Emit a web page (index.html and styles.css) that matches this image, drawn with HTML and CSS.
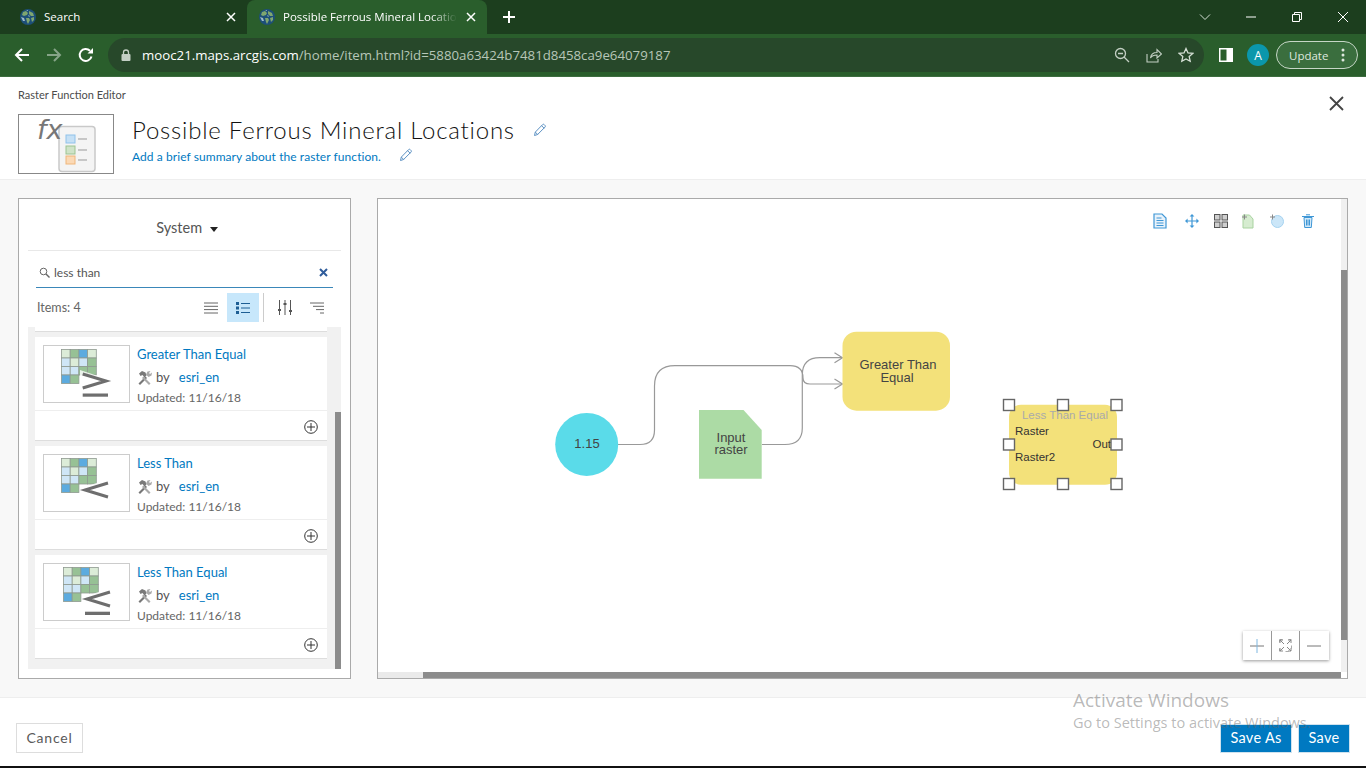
FILE: index.html
```html
<!DOCTYPE html>
<html>
<head>
  <meta charset="utf-8">
  <meta name="viewport" content="width=device-width, initial-scale=1.0">
  <title>Possible Ferrous Mineral Locations</title>
  <link rel="stylesheet" href="styles.css">
</head>
<body>
<svg class="hidden">
  <symbol id="globe" viewBox="0 0 16 16">
    <circle cx="8" cy="8" r="8" fill="#1d4f78"/>
    <path d="M3 3l3-1 2 2-1 2-3 1-2-1zM9 2l4 2 1 3-3 0-2-2zM6 9l3 0 1 2-2 4-1-2zM11 9l3-1 0 3-2 2z" fill="#7fa66f"/>
    <path d="M1 8l3 1 1 3-2 0zM8 6l2 1-1 1zM6 1l2 0 0 1z" fill="#9db8c8"/>
  </symbol>
  <symbol id="tab-close" viewBox="0 0 10 10">
    <path d="M1 1l8 8M9 1l-8 8" stroke="#fff" stroke-width="1.5" fill="none"/>
  </symbol>
  <symbol id="pencil" viewBox="0 0 14 14">
    <path d="M1.5 12.5l.8-3.4 7.2-7.4a1.2 1.2 0 0 1 1.8 0l.7.7a1.2 1.2 0 0 1 0 1.7l-7.4 7.4zM8.6 2.7l2.6 2.6M2.3 9.1l2.6 2.6" fill="none" stroke="#5d92c4" stroke-width="1"/>
  </symbol>
  <symbol id="tools" viewBox="0 0 15 15">
    <path d="M1.5 13.5l7-7 1.5 1.5-7 7z" fill="#777"/>
    <path d="M13.5 13.5l-7-7-1.500 1.500 7 7z" fill="#aaa"/>
    <path d="M2 3.500l3-2.500 3.500 1.500 1 3-2 2-2-2.500-2 1z" fill="#7a7a7a"/>
    <path d="M9 4.500l1.500-3 3-.5-1.500 2 1 1 2-1.500-.5 3-3 1.500z" fill="#aaa"/>
  </symbol>
  <symbol id="add" viewBox="0 0 14 14">
    <circle cx="7" cy="7" r="6.300" fill="#fff" stroke="#333" stroke-width="1"/>
    <path d="M3 7h8M7 3v8" stroke="#333" stroke-width="1"/>
  </symbol>
  <symbol id="grid" viewBox="0 0 36 35">
    <g stroke="#8e9a90" stroke-width=".8">
      <rect x=".5" y=".5" width="8.700" height="8.500" fill="#dcecd8"/>
      <rect x="9.200" y=".5" width="8.700" height="8.500" fill="#97c195"/>
      <rect x="17.900" y=".5" width="8.700" height="8.500" fill="#5cabdf"/>
      <rect x="26.600" y=".5" width="8.700" height="8.500" fill="#dcecd8"/>
      <rect x=".5" y="9" width="8.700" height="8.500" fill="#cfe6f6"/>
      <rect x="9.200" y="9" width="8.700" height="8.500" fill="#dcecd8"/>
      <rect x="17.900" y="9" width="8.700" height="8.500" fill="#cfe6f6"/>
      <rect x="26.600" y="9" width="8.700" height="8.500" fill="#97c195"/>
      <rect x=".5" y="17.500" width="8.700" height="8.500" fill="#cfe6f6"/>
      <rect x="9.200" y="17.500" width="8.700" height="8.500" fill="#cfe6f6"/>
      <rect x="17.900" y="17.500" width="8.700" height="8.500" fill="#97c195"/>
      <rect x="26.600" y="17.500" width="8.700" height="8.500" fill="#97c195"/>
      <rect x=".5" y="26" width="8.700" height="8.500" fill="#5cabdf"/>
      <rect x="9.200" y="26" width="8.700" height="8.500" fill="#97c195"/>
    </g>
  </symbol>
</svg>

<div class="tabstrip">
  <div class="tab">
    <svg class="favicon"><use href="#globe"/></svg>
    <span class="tab-title">Search</span>
    <svg class="tab-x"><use href="#tab-close"/></svg>
  </div>
  <div class="tab tab-active">
    <svg class="favicon"><use href="#globe"/></svg>
    <span class="tab-title tab-fade">Possible Ferrous Mineral Locations</span>
    <svg class="tab-x"><use href="#tab-close"/></svg>
  </div>
  <svg class="new-tab" viewBox="0 0 12 12"><path d="M6 0v12M0 6h12" stroke="#fff" stroke-width="2"/></svg>
  <div class="win-controls">
    <div class="win-btn"><svg width="12" height="8" viewBox="0 0 12 8"><path d="M1 1.500l5 5 5-5" fill="none" stroke="#d5dfd5"/></svg></div>
    <div class="win-btn"><svg width="12" height="2" viewBox="0 0 12 2"><path d="M1 1h10" stroke="#fff"/></svg></div>
    <div class="win-btn"><svg width="12" height="12" viewBox="0 0 12 12"><path d="M1.500 3.500h7v7h-7zM3.500 3.500v-2h7v7h-2" fill="none" stroke="#fff"/></svg></div>
    <div class="win-btn"><svg width="12" height="12" viewBox="0 0 12 12"><path d="M1 1l10 10M11 1l-10 10" stroke="#fff"/></svg></div>
  </div>
</div>

<div class="toolbar">
  <div class="nav-btn"><svg width="16" height="16" viewBox="0 0 16 16"><path d="M15 8H2M8 2L2 8l6 6" fill="none" stroke="#fff" stroke-width="2"/></svg></div>
  <div class="nav-btn"><svg width="16" height="16" viewBox="0 0 16 16"><path d="M1 8h13M8 2l6 6-6 6" fill="none" stroke="#86a488" stroke-width="2"/></svg></div>
  <div class="nav-btn"><svg width="16" height="16" viewBox="0 0 16 16"><path d="M13.500 9.500A6 6 0 1 1 12 3.800" fill="none" stroke="#fff" stroke-width="2"/><path d="M9.500 6.500H15V1z" fill="#fff"/></svg></div>
  <div class="omnibox">
    <svg class="lock" width="10" height="12" viewBox="0 0 10 12"><path d="M2.500 5V3.500a2.500 2.500 0 0 1 5 0V5" fill="none" stroke="#c3cfc4" stroke-width="1.300"/><rect y="5" width="9" height="7" x=".5" rx="1" fill="#c3cfc4"/></svg>
    <span class="url"><span class="url-host">mooc21.maps.arcgis.com</span>/home/item.html?id=5880a63424b7481d8458ca9e64079187</span>
    <div class="omni-icons">
      <svg width="16" height="16" viewBox="0 0 16 16"><circle cx="6.500" cy="6.500" r="5" fill="none" stroke="#c3cfc4" stroke-width="1.300"/><path d="M10 10l5 5M4 6.500h5" stroke="#c3cfc4" stroke-width="1.300"/></svg>
      <svg width="16" height="16" viewBox="0 0 16 16"><path d="M1 7v8h11v-3" fill="none" stroke="#c3cfc4" stroke-width="1.100"/><path d="M4.500 11c.5-4 3.500-5.500 6.500-5.500V2.500l4.500 4.500-4.500 4V8c-2.500 0-5 .5-6.500 3z" fill="none" stroke="#c3cfc4" stroke-width="1.100"/></svg>
      <svg width="16" height="16" viewBox="0 0 16 16"><path d="M8 1.500l2 4.400 4.800.5-3.600 3.200 1 4.700L8 11.900l-4.200 2.400 1-4.700L1.200 6.400 6 5.900z" fill="none" stroke="#d5dfd5" stroke-width="1.300"/></svg>
    </div>
  </div>
  <div class="nav-btn"><svg width="14" height="14" viewBox="0 0 14 14"><path d="M0 0h14v14H0zM1.500 1.500v11h6v-11z" fill="#fff" fill-rule="evenodd"/></svg></div>
  <div class="nav-btn"><span class="avatar">A</span></div>
  <div class="update">
    <span>Update</span>
    <svg width="4" height="14" viewBox="0 0 4 14"><circle cx="2" cy="2" r="1.500" fill="#dfe8df"/><circle cx="2" cy="7" r="1.500" fill="#dfe8df"/><circle cx="2" cy="12" r="1.500" fill="#dfe8df"/></svg>
  </div>
</div>

<header class="editor-head">
  <div>
    <div class="editor-label">Raster Function Editor</div>
    <div class="title-row">
      <div class="logo-box">
        <svg width="94" height="58" viewBox="0 0 94 58">
          <rect x="40" y="11.500" width="36" height="45" rx="3" fill="#f4f4f4" stroke="#c9c9c9" stroke-width="1.500"/>
          <rect x="47" y="20" width="9" height="8" fill="#c5e0f5" stroke="#8fc2ea"/>
          <rect x="47" y="31" width="9" height="8" fill="#cfe3c8" stroke="#9cc391"/>
          <rect x="47" y="41" width="9" height="8" fill="#fbd9b5" stroke="#efb67b"/>
          <path d="M59 24h9M59 35h9M59 45h9" stroke="#999"/>
          <text class="logo-fx" x="18" y="24">fx</text>
        </svg>
      </div>
      <div class="title-text">
        <div class="title-line">
          <h1>Possible Ferrous Mineral Locations</h1>
          <svg class="edit-title"><use href="#pencil"/></svg>
        </div>
        <div class="summary-line">
          <span>Add a brief summary about the raster function.</span>
          <svg class="edit-summary"><use href="#pencil"/></svg>
        </div>
      </div>
    </div>
  </div>
  <svg class="editor-close" viewBox="0 0 24 24"><path d="M6 5l13 13M19 5L6 18" stroke="#444" stroke-width="1.800"/></svg>
</header>

<main class="workspace">
  <section class="fn-panel">
    <div class="fn-scope">System <span class="caret"></span></div>
    <div class="fn-inner">
      <div class="fn-head">
        <div class="fn-search">
          <svg width="11" height="11" viewBox="0 0 11 11"><circle cx="4.500" cy="4.500" r="3.300" fill="none" stroke="#666"/><path d="M7 7l3.500 3.500" stroke="#666" stroke-width="1.400"/></svg>
          <span class="fn-query">less than</span>
          <svg width="9" height="9" viewBox="0 0 9 9"><path d="M1 1l7 7M8 1l-7 7" stroke="#2f5c9b" stroke-width="2"/></svg>
        </div>
        <div class="fn-tools">
          <span class="fn-count">Items: 4</span>
          <div class="view-btn"><svg width="14" height="12" viewBox="0 0 14 12"><path d="M0 1h14M0 4.300h14M0 7.600h14M0 11h14" stroke="#666"/></svg></div>
          <div class="view-btn view-on"><svg width="14" height="12" viewBox="0 0 14 12"><path d="M0 0h3v3H0zM0 4.500h3v3H0zM0 9h3v3H0z" fill="#1d5e94"/><path d="M5 1.500h9M5 6h9M5 10.500h9" stroke="#1d5e94"/></svg></div>
          <span class="view-sep"></span>
          <div class="view-btn"><svg width="14" height="15" viewBox="0 0 14 15"><path d="M1.500 0v15M7 0v15M12.500 0v15" stroke="#555"/><path d="M0 10h3M5.500 4h3M11 11h3" stroke="#555" stroke-width="2"/></svg></div>
          <div class="view-btn"><svg width="14" height="12" viewBox="0 0 14 12"><path d="M0 1h14M3 4.300h11M6 7.600h8M10 11h4" stroke="#666"/></svg></div>
        </div>
      </div>
      <div class="fn-body">
        <div class="fn-cards">
          <div class="card-cut"></div>

          <article class="fn-card">
            <div class="fn-main">
              <svg class="fn-thumb" viewBox="0 0 85 56">
                <use href="#grid" x="17" y="3" width="36" height="35"/>
                <path d="M36 24l27 9-3 14H36z" fill="#fff" opacity=".8"/>
                <path d="M38.700 28L62 35l-23.300 7" fill="none" stroke="#6e6e6e" stroke-width="3"/>
                <rect x="38.700" y="47.500" width="25.300" height="3.200" fill="#6e6e6e"/>
              </svg>
              <div class="fn-info">
                <div class="fn-name">Greater Than Equal</div>
                <div class="fn-by"><svg class="tool-ic"><use href="#tools"/></svg><span class="by">by</span><span class="owner">esri_en</span></div>
                <div class="fn-date">Updated: 11/16/18</div>
              </div>
            </div>
            <div class="fn-foot"><svg class="add-ic"><use href="#add"/></svg></div>
          </article>

          <article class="fn-card">
            <div class="fn-main">
              <svg class="fn-thumb" viewBox="0 0 85 56">
                <use href="#grid" x="17" y="3" width="36" height="35"/>
                <path d="M38 33l26-9 2 22-20-2z" fill="#fff" opacity=".8"/>
                <path d="M64 28l-23 7 23 7" fill="none" stroke="#6e6e6e" stroke-width="3"/>
              </svg>
              <div class="fn-info">
                <div class="fn-name">Less Than</div>
                <div class="fn-by"><svg class="tool-ic"><use href="#tools"/></svg><span class="by">by</span><span class="owner">esri_en</span></div>
                <div class="fn-date">Updated: 11/16/18</div>
              </div>
            </div>
            <div class="fn-foot"><svg class="add-ic"><use href="#add"/></svg></div>
          </article>

          <article class="fn-card">
            <div class="fn-main">
              <svg class="fn-thumb" viewBox="0 0 85 56">
                <use href="#grid" x="19" y="3" width="36" height="35"/>
                <path d="M40 33l26-9 2 22-20-2z" fill="#fff" opacity=".8"/>
                <path d="M66 28l-23 7 23 7" fill="none" stroke="#6e6e6e" stroke-width="3"/>
                <rect x="41" y="47.700" width="25" height="3.300" fill="#6e6e6e"/>
              </svg>
              <div class="fn-info">
                <div class="fn-name">Less Than Equal</div>
                <div class="fn-by"><svg class="tool-ic"><use href="#tools"/></svg><span class="by">by</span><span class="owner">esri_en</span></div>
                <div class="fn-date">Updated: 11/16/18</div>
              </div>
            </div>
            <div class="fn-foot"><svg class="add-ic"><use href="#add"/></svg></div>
          </article>
        </div>
        <div class="fn-scroll"><div class="fn-scroll-thumb"></div></div>
      </div>
    </div>
  </section>

  <section class="canvas">
    <svg class="diagram" viewBox="378 199 969 479">
      <g fill="none" stroke="#999" stroke-width="1.200">
        <path d="M618 444.500H640Q654.500 444.500 654.500 430V386Q654.500 365.700 675 365.700H790Q803 365.700 803 378Q803 384 810 384H842"/>
        <path d="M762 444.500H785Q802.300 444.500 802.300 428V375Q802.300 357.700 820 357.700H842"/>
        <path d="M834.500 352.700L842.500 357.700L834.500 362.700M834.500 379L842.500 384L834.500 389"/>
      </g>
      <circle cx="586.700" cy="444.400" r="31.500" fill="#5adbe9"/>
      <path d="M699 410H743.500L761.700 430V478.700H699z" fill="#acdba5"/>
      <rect x="842.500" y="331.700" width="107.500" height="79" rx="14" fill="#f3e17a"/>
      <rect x="1009" y="404.700" width="108" height="80" rx="12" fill="#f3e17a"/>
      <text class="node" x="587" y="448" text-anchor="middle">1.15</text>
      <text class="node" x="731" y="441.500" text-anchor="middle">Input</text>
      <text class="node" x="731" y="454" text-anchor="middle">raster</text>
      <text class="node" x="898" y="369" text-anchor="middle">Greater Than</text>
      <text class="node" x="897" y="381.500" text-anchor="middle">Equal</text>
      <text class="node-name" x="1065" y="419" text-anchor="middle">Less Than Equal</text>
      <text class="port" x="1015" y="434.500">Raster</text>
      <text class="port" x="1015" y="460.500">Raster2</text>
      <text class="port" x="1111" y="447.500" text-anchor="end">Out</text>
      <g fill="#fff" stroke="#666" stroke-width="1.400">
        <rect x="1003.500" y="399.500" width="11" height="11"/>
        <rect x="1057.500" y="399.500" width="11" height="11"/>
        <rect x="1111" y="399.500" width="11" height="11"/>
        <rect x="1003.500" y="439" width="11" height="11"/>
        <rect x="1111" y="439" width="11" height="11"/>
        <rect x="1003.500" y="478.500" width="11" height="11"/>
        <rect x="1057.500" y="478.500" width="11" height="11"/>
        <rect x="1111" y="478.500" width="11" height="11"/>
      </g>
    </svg>

    <div class="canvas-tools">
      <svg width="14" height="16" viewBox="0 0 14 16"><path d="M1 1h8l4 4v10H1z" fill="#e8f2fa" stroke="#3f97d6" stroke-width="1.200"/><path d="M3.500 5h5M3.500 7.500h7M3.500 10h7M3.500 12.500h7" stroke="#3f97d6"/></svg>
      <svg width="14" height="14" viewBox="0 0 14 14"><path d="M7 1v12M1 7h12" stroke="#3f97d6" stroke-width="1.200"/><path d="M7 0l2.400 2.600H4.600zM7 14l2.400-2.600H4.600zM0 7l2.600-2.400v4.800zM14 7l-2.600-2.400v4.800z" fill="#3f97d6"/></svg>
      <svg width="14" height="14" viewBox="0 0 14 14"><g fill="#cfcfcf" stroke="#555"><rect x=".5" y=".5" width="5.500" height="5.500"/><rect x="8" y=".5" width="5.500" height="5.500"/><rect x=".5" y="8" width="5.500" height="5.500"/><rect x="8" y="8" width="5.500" height="5.500"/></g></svg>
      <svg width="12" height="15" viewBox="0 0 12 15"><path d="M1 1h6.500L11 5v9H1z" fill="#d6ecd0" stroke="#a9d3a0"/><path d="M0 3h5M2.500 .5v5" stroke="#888"/></svg>
      <svg width="14" height="14" viewBox="0 0 14 14"><circle cx="7.500" cy="7.500" r="6" fill="#cbe6f8" stroke="#a5d2ef"/><path d="M0 3h5M2.500 .5v5" stroke="#888"/></svg>
      <svg width="12" height="14" viewBox="0 0 12 14"><path d="M2 3.500h8l-.7 10H2.700z" fill="#d3e9f8" stroke="#3f97d6"/><path d="M0 2.500h12M4 0.800h4M4.500 5.500v6M6 5.500v6M7.500 5.500v6" stroke="#3f97d6"/></svg>
    </div>

    <div class="zoom-box">
      <div class="zoom-btn"><svg width="14" height="14" viewBox="0 0 14 14"><path d="M0 7h14" stroke="#777"/><path d="M7 0v14" stroke="#7fb7e0"/></svg></div>
      <div class="zoom-btn"><svg width="13" height="13" viewBox="0 0 13 13"><path d="M.5 .5h12v12H.5z" fill="none" stroke="#aaa" stroke-dasharray="3 6"/><path d="M1 1l4 4M12 1L8 5M1 12l4-4M12 12L8 8M1 1h3M1 1v3M12 1H9M12 1v3M1 12h3M1 12V9M12 12H9M12 12V9" stroke="#888" fill="none"/></svg></div>
      <div class="zoom-btn"><svg width="14" height="2" viewBox="0 0 14 2"><path d="M0 1h14" stroke="#777"/></svg></div>
    </div>

    <div class="vbar"><div class="vbar-thumb"></div></div>
    <div class="hbar"><div class="hbar-thumb"></div></div>
  </section>
</main>

<footer class="editor-foot">
  <button class="btn-cancel">Cancel</button>
  <div class="foot-actions">
    <button class="btn-save btn-save-as">Save As</button>
    <button class="btn-save">Save</button>
  </div>
</footer>

<div class="activate">
  <div class="activate-big">Activate Windows</div>
  <div class="activate-small">Go to Settings to activate Windows.</div>
</div>
</body>
</html>
```

FILE: styles.css
```css
* { box-sizing: border-box; }
html, body { margin: 0; padding: 0; }
body { width: 1366px; height: 768px; overflow: hidden; display: flex; flex-direction: column; background: #111; font-family: Lato, "Open Sans", sans-serif; color: #4c4c4c; position: relative; }
svg { display: block; flex: none; }
.hidden { display: none; }

/* browser chrome */
.tabstrip { height: 34px; flex: none; display: flex; align-items: center; background: #1c3e1e; color: #fff; font-family: "Open Sans", sans-serif; font-size: 11.500px; padding-left: 8px; }
.tab { width: 239px; height: 34px; display: flex; align-items: center; padding: 0 10px 0 12px; }
.tab-active { width: 240px; background: #2a5e2c; border-radius: 8px 8px 0 0; }
.favicon { width: 16px; height: 16px; }
.tab-title { flex: 1; margin-left: 8px; margin-top: -1px; white-space: nowrap; overflow: hidden; }
.tab-fade { -webkit-mask-image: linear-gradient(to right, #000 85%, transparent 100%); mask-image: linear-gradient(to right, #000 85%, transparent 100%); }
.tab-x { width: 10px; height: 10px; margin-left: 9px; margin-right: 1px; }
.new-tab { width: 12px; height: 12px; margin-left: 16px; }
.win-controls { margin-left: auto; display: flex; }
.win-btn { width: 46px; height: 30px; display: flex; align-items: center; justify-content: center; }

.toolbar { height: 43px; flex: none; display: flex; align-items: center; padding: 0 8px 0 6px; background: #2a5e2c; border-bottom: 1px solid #3d6d3f; }
.nav-btn { width: 32px; height: 32px; display: flex; align-items: center; justify-content: center; flex: none; }
.omnibox { flex: 1; height: 34px; margin: 0 6px; display: flex; align-items: center; background: #27482a; border-radius: 17px; padding: 0 10px 0 13px; }
.url { margin-left: 11px; font-family: "Open Sans", sans-serif; font-size: 13.250px; color: #b7c6b8; white-space: nowrap; }
.url-host { color: #fff; }
.omni-icons { margin-left: auto; display: flex; gap: 16px; }
.avatar { width: 22px; height: 22px; border-radius: 50%; background: #0b97ab; color: #fff; font-family: "Open Sans", sans-serif; font-size: 12px; display: flex; align-items: center; justify-content: center; }
.update { width: 82px; height: 28px; margin-left: 2px; display: flex; align-items: center; justify-content: space-between; padding: 0 12px 0 12px; border: 1px solid #c6d6c7; border-radius: 14px; background: #3a6e3e; color: #dfe8df; font-family: "Open Sans", sans-serif; font-size: 11.500px; }

/* editor header */
.editor-head { height: 103px; flex: none; display: flex; justify-content: space-between; padding: 11px 18px 0; background: #fff; border-bottom: 1px solid #eee; }
.editor-label { font-size: 11px; line-height: 14px; color: #4c4c4c; }
.title-row { display: flex; margin-top: 12px; }
.logo-box { width: 96px; height: 60px; border: 1px solid #888; }
.logo-fx { font-family: "DejaVu Sans", sans-serif; font-style: italic; font-size: 27px; fill: #777; }
.title-text { margin-left: 18px; margin-top: -1px; }
.title-line { display: flex; align-items: center; height: 34px; }
h1 { margin: 0; font-weight: 300; font-size: 24px; line-height: 34px; color: #111; letter-spacing: .78px; }
.edit-title { width: 14px; height: 14px; margin-left: 18px; }
.summary-line { display: flex; align-items: center; height: 18px; font-size: 12px; letter-spacing: .07px; color: #0079c1; }
.edit-summary { width: 14px; height: 14px; margin-left: 18px; margin-top: -3px; }
.editor-close { width: 24px; height: 24px; margin-top: 4px; }

/* main area */
.workspace { height: 517px; flex: none; display: flex; gap: 26px; padding: 18px 0 18px 18px; background: #f8f8f8; }
.fn-panel { width: 333px; display: flex; flex-direction: column; padding: 0 9px 9px; background: #fff; border: 1px solid #aaa; }
.fn-scope { height: 51px; flex: none; padding: 20px 0 0 5px; text-align: center; font-size: 14.500px; line-height: 17px; color: #555; }
.caret { display: inline-block; margin-left: 4px; border: 4.500px solid transparent; border-top: 5px solid #222; border-bottom: 0; vertical-align: middle; }
.fn-inner { flex: 1; display: flex; flex-direction: column; border-top: 1px solid #e8e8e8; min-height: 0; }
.fn-head { height: 76px; flex: none; padding: 7px 8px 0 8px; background: #fff; }
.fn-search { height: 30px; display: flex; align-items: center; padding: 0 5px 0 3px; border-bottom: 1px solid #3a87b9; }
.fn-query { flex: 1; margin-left: 4px; font-size: 12px; color: #555; }
.fn-tools { display: flex; align-items: center; height: 29px; margin-top: 5px; }
.fn-count { flex: 1; padding-left: 1px; font-size: 12.500px; color: #666; }
.view-btn { width: 32px; height: 29px; display: flex; align-items: center; justify-content: center; }
.view-on { background: #c7e7fb; }
.view-sep { width: 1px; height: 29px; margin: 0 5px 0 4px; background: #ccc; }
.fn-body { flex: 1; display: flex; background: #f1f1f1; min-height: 0; }
.fn-cards { width: 307px; padding-left: 7px; display: flex; flex-direction: column; gap: 5px; overflow: hidden; }
.card-cut { width: 292px; height: 5px; flex: none; background: #fff; border-bottom: 1px solid #ddd; }
.fn-card { width: 292px; height: 104px; flex: none; background: #fff; border-bottom: 1px solid #ddd; }
.fn-main { height: 74px; display: flex; padding: 8px 0 0 8px; border-bottom: 1px solid #eee; }
.fn-thumb { width: 87px; height: 58px; border: 1px solid #ccc; }
.fn-info { margin-left: 7px; font-size: 12px; line-height: 18px; }
.fn-name { color: #0079c1; font-size: 13px; }
.fn-by { display: flex; align-items: center; margin-top: 5px; font-size: 13px; color: #555; }
.tool-ic { width: 15px; height: 15px; }
.by { margin-left: 4px; }
.owner { margin-left: 9px; color: #0079c1; }
.fn-date { margin-top: 3px; color: #666; }
.fn-foot { height: 29px; display: flex; align-items: center; justify-content: flex-end; padding: 2px 9px 0 0; }
.add-ic { width: 14px; height: 14px; }
.fn-scroll { width: 6px; display: flex; flex-direction: column; padding-top: 85px; }
.fn-scroll-thumb { flex: 1; background: #8c8c8c; }

/* diagram canvas */
.canvas { width: 971px; position: relative; background: #fff; border: 1px solid #aaa; }
.diagram { width: 969px; height: 479px; }
.node { font-family: "Liberation Sans", Arial, sans-serif; font-size: 13px; fill: #444; }
.node-name { font-family: "Liberation Sans", Arial, sans-serif; font-size: 11.500px; fill: #aaa; }
.port { font-family: "Liberation Sans", Arial, sans-serif; font-size: 11.500px; fill: #333; }
.canvas-tools { position: absolute; top: 14px; left: 775px; display: flex; align-items: center; gap: 16px; }
.canvas-tools svg:nth-child(2) { margin-left: 2px; }
.canvas-tools svg:nth-child(3) { margin-left: -1px; }
.canvas-tools svg:nth-child(4) { margin-left: -2px; }
.canvas-tools svg:nth-child(6) { margin-left: 2px; }
.zoom-box { position: absolute; top: 432px; left: 865px; display: flex; height: 29px; background: #fff; box-shadow: 0 1px 3px rgba(0, 0, 0, .4); }
.zoom-btn { width: 28.500px; display: flex; align-items: center; justify-content: center; border-right: 1px solid #999; }
.zoom-btn:last-child { border-right: 0; }
.vbar { position: absolute; top: 0; left: 963px; width: 6px; height: 473px; background: #f0f0f0; padding-top: 71px; display: flex; }
.vbar-thumb { width: 6px; height: 370px; background: #8c8c8c; }
.hbar { position: absolute; top: 473px; left: 0; width: 963px; height: 6px; background: #eaeaea; padding-left: 45px; display: flex; }
.hbar-thumb { width: 919px; height: 6px; background: #8c8c8c; }

/* footer */
.editor-foot { height: 69px; flex: none; display: flex; justify-content: space-between; padding: 25px 16px 0; background: #fff; border-top: 1px solid #eee; }
button { font-family: Lato, "Open Sans", sans-serif; font-size: 14px; padding: 0 0 2px; }
.btn-cancel { width: 67px; height: 30px; background: #fff; color: #595959; border: 1px solid #ddd; letter-spacing: .8px; }
.foot-actions { display: flex; gap: 6px; margin-top: 1px; }
.btn-save { width: 52px; height: 29px; font-size: 14.500px; letter-spacing: .3px; background: #0079c1; color: #fff; border: 1px solid #cfe2ee; }
.btn-save-as { width: 72px; }

/* windows watermark, sits over the footer */
.activate { position: absolute; left: 1073px; top: 687px; font-family: "Open Sans", sans-serif; color: rgba(100, 100, 100, .45); }
.activate-big { font-size: 19px; line-height: 27px; }
.activate-small { font-size: 14.500px; line-height: 19px; margin-top: -1px; }
```
